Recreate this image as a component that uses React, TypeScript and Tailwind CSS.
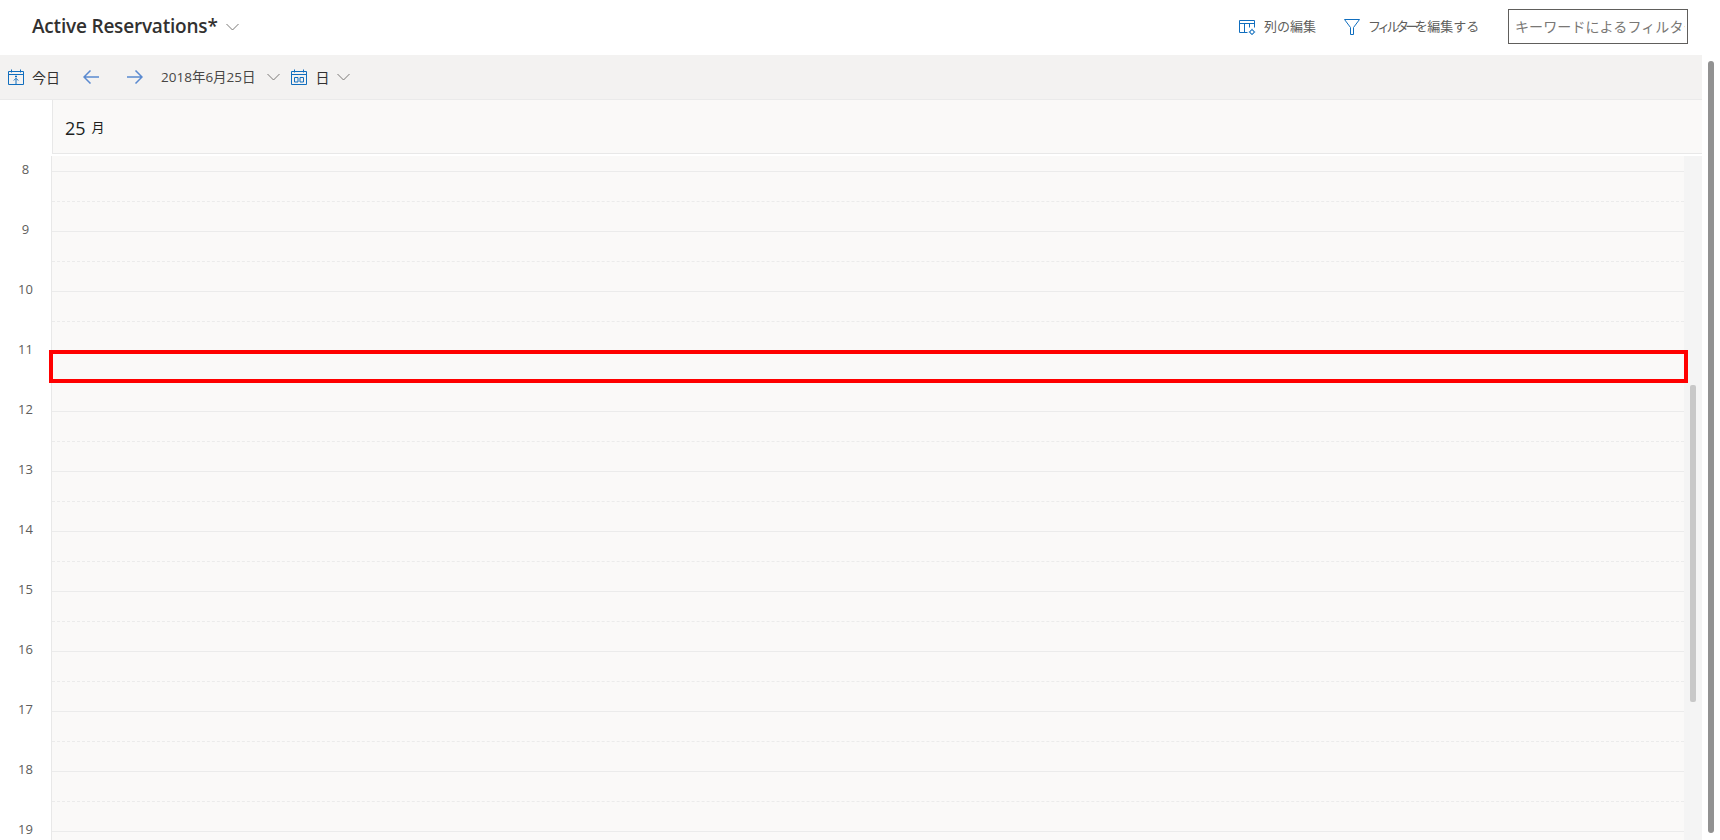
const FONT = "font-['Open_Sans','Noto_Sans_CJK_JP',sans-serif]";
const HOURS = [8, 9, 10, 11, 12, 13, 14, 15, 16, 17, 18, 19];

function Chevron() {
  return (
    <svg width="13" height="8" viewBox="0 0 13 8" fill="none" stroke="#7a7876" strokeWidth="1" className="shrink-0">
      <path d="M.5 1 6.5 7l6-6" />
    </svg>
  );
}

function TodayIcon() {
  return (
    <svg width="16" height="16" viewBox="0 0 16 16" fill="none" stroke="#106ebe" strokeWidth="1">
      <path d="M.5 2.5h15v13H.5zM.5 5.5h15M3.5 .5v3M12.5 .5v3" />
      <path d="M8 15V9.5M5.8 11.5 8 9.3l2.2 2.2" />
      <path d="M7 6.8h2v1.4H7z" fill="#106ebe" stroke="none" />
    </svg>
  );
}

function DayIcon() {
  return (
    <svg width="16" height="16" viewBox="0 0 16 16" fill="none" stroke="#106ebe" strokeWidth="1">
      <path d="M.5 2.5h15v13H.5zM.5 5.5h15M3.5 .5v3M12.5 .5v3" />
      <path d="M3.5 8.5h3.5v4.5H3.5zM9 8.5h3.5v4.5H9z" />
    </svg>
  );
}

function ColumnsIcon() {
  return (
    <svg width="17" height="16" viewBox="0 0 17 16" fill="none" stroke="#106ebe" strokeWidth="1">
      <path d="M8.5 13.5H.5v-12h15v7M.5 4.5h15M5.5 4.5v9M10.5 4.5v4" />
      <circle cx="13" cy="13" r="2" />
      <path d="M13 9.8v1.2M13 15v1.2M9.8 13H11M15 13h1.2" />
    </svg>
  );
}

function FilterIcon() {
  return (
    <svg width="16" height="16" viewBox="0 0 16 16" fill="none" stroke="#106ebe" strokeWidth="1">
      <path d="M.5 .5h15L9.5 8.5v7h-3v-7z" />
    </svg>
  );
}

function ArrowIcon({ flip }: { flip?: boolean }) {
  return (
    <svg width="16" height="14" viewBox="0 0 16 14" fill="none" stroke="#5a8ad0" strokeWidth="1.5" className={flip ? 'rotate-180' : ''}>
      <path d="M16 7H1M7.5 .5 1 7l6.5 6.5" />
    </svg>
  );
}

export default function App() {
  return (
    <div className={`h-[840px] w-[1720px] overflow-hidden bg-white text-[#323130] ${FONT}`}>
      {/* Title bar */}
      <div className="h-[55px] flex items-center pb-[2px] pl-8 pr-8">
        <h1 className="text-[19px] font-semibold leading-none tracking-[-0.2px] text-[#323130]">Active Reservations*</h1>
        <span className="ml-[8px] mt-[1px]"><Chevron /></span>

        <div className="ml-auto flex items-center">
          <ColumnsIcon />
          <span className="ml-[8px] w-[52px] text-[13px] text-[#605e5c]">列の編集</span>
          <span className="ml-[28px]"><FilterIcon /></span>
          <span className="ml-[8px] w-[110px] whitespace-nowrap text-[13px] text-[#605e5c]">
            <span className="tracking-[-3.6px]">フィルターを</span>
            <span className="ml-[3px]">編集する</span>
          </span>
          <input
            readOnly
            placeholder="キーワードによるフィルター"
            className="ml-[30px] h-[35px] w-[180px] border border-[#605e5c] pl-[6px] pr-[2px] text-[14px] tracking-[0.1px] outline-none placeholder:text-[#797775]"
          />
        </div>
      </div>

      <div className="flex h-[785px]">
        <div className="w-[1702px]">
          {/* Calendar toolbar */}
          <div className="h-[45px] flex items-center bg-[#f3f2f1] border-b border-[#eaeaea] pl-2 text-[14px]">
            <TodayIcon />
            <span className="ml-[8px] text-[#323130]">今日</span>
            <span className="ml-[23px]"><ArrowIcon /></span>
            <span className="ml-[28px]"><ArrowIcon flip /></span>
            <span className="ml-[18px] text-[13.5px] text-[#484644]">2018年6月25日</span>
            <span className="ml-[11px]"><Chevron /></span>
            <span className="ml-[11px]"><DayIcon /></span>
            <span className="ml-[9px]">日</span>
            <span className="ml-[7px]"><Chevron /></span>
          </div>

          {/* Day header */}
          <div className="ml-[52px] h-[54px] flex items-center pt-[3px] pl-3 bg-[#faf9f8] border-l border-b border-[#e8e8e8]">
            <span className="text-[18px] text-[#201f1e]">25</span>
            <span className="ml-[6px] text-[13px] text-[#201f1e]">月</span>
          </div>

          {/* Time grid */}
          <div className="relative mt-[2px] flex h-[684px] overflow-hidden">
            <div className="w-[51px] shrink-0">
              {HOURS.map((h) => (
                <div key={h} className="h-[60px] text-center text-[13px] leading-[27px] text-[#605e5c]">{h}</div>
              ))}
            </div>
            <div className="flex-1 bg-[#faf9f8] border-l border-[#e8e8e8]">
              <div className="h-[16px] border-b border-[#ebebeb]" />
              {HOURS.map((h) => (
                <div key={h}>
                  <div className="h-[30px] border-b border-dashed border-[#ebebeb]" />
                  <div className="h-[30px] border-b border-[#ebebeb]" />
                </div>
              ))}
            </div>
            {/* inner scrollbar */}
            <div className="w-[18px] shrink-0 bg-[#f4f4f4] pl-[6px] pt-[229px]">
              <div className="h-[317px] w-[6px] rounded-[2px] bg-[#c8c8c8]" />
            </div>
            {/* highlight annotation */}
            <div className="absolute left-[49px] top-[194px] h-[33px] w-[1639px] border-4 border-[#ff0000]" />
          </div>
        </div>

        {/* page scrollbar */}
        <div className="w-[18px] pl-[6px] pt-[6px]">
          <div className="h-[772px] w-[6px] rounded-[3px] bg-[#929292]" />
        </div>
      </div>
    </div>
  );
}
